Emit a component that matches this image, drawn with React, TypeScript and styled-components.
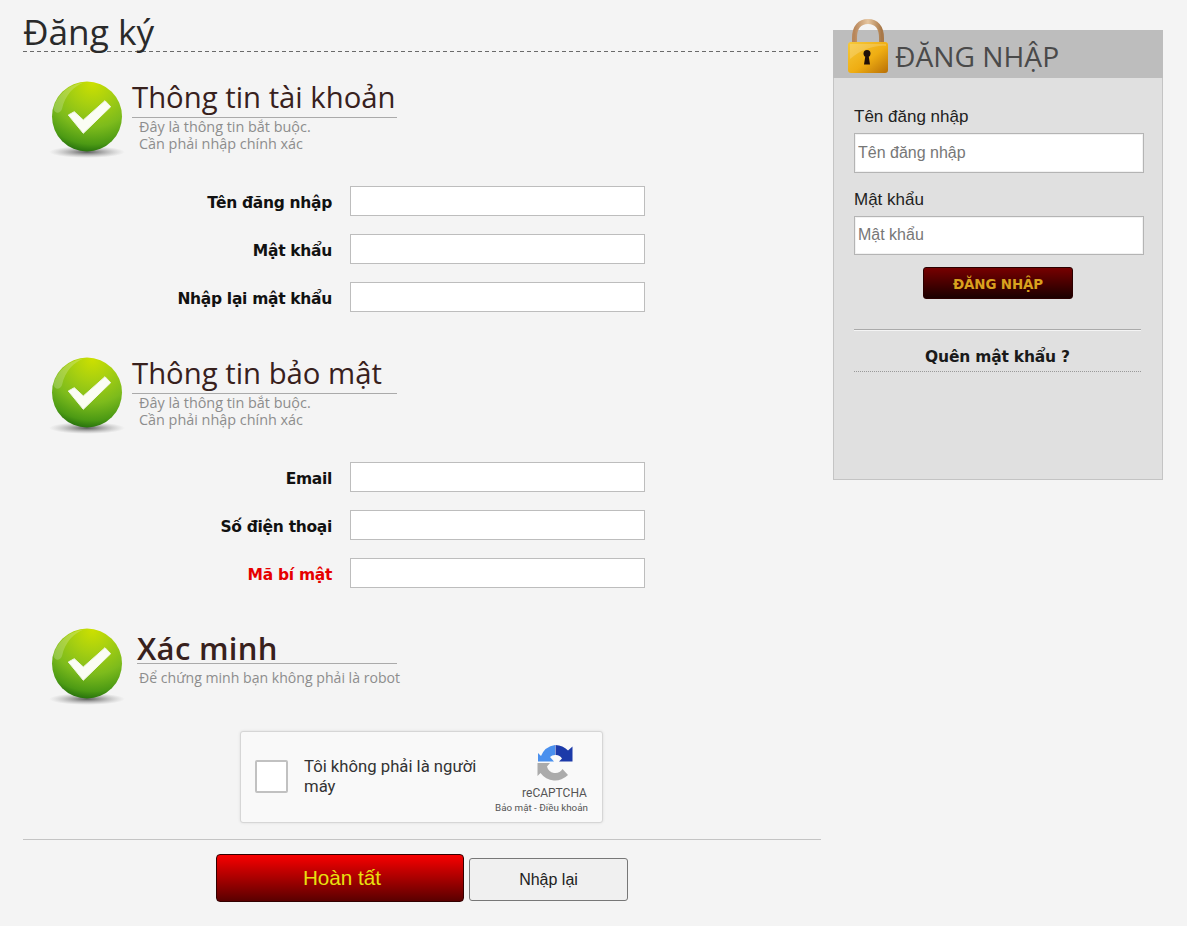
import React from 'react';
import styled, { createGlobalStyle } from 'styled-components';

const Global = createGlobalStyle`
  html, body { margin: 0; padding: 0; background: #f4f4f4; }
  body { font-family: "Liberation Sans", Arial, sans-serif; color: #111; }
  * { box-sizing: border-box; }
`;

const Page = styled.div`
  display: flex;
  align-items: flex-start;
  width: 1187px;
  height: 926px;
  overflow: hidden;
  padding-left: 23px;
`;
const Main = styled.main`
  width: 798px;
  flex: none;
`;
const PageTitle = styled.h1`
  margin: 0;
  height: 52px;
  padding-top: 9px;
  font: 400 35.2px/44px "Open Sans", sans-serif;
  color: #2a2a2a;
  background: repeating-linear-gradient(90deg, #6a6a6a 0 4px, transparent 4px 7px) left bottom / 100% 1px no-repeat;
  white-space: nowrap;
`;
const SectionHead = styled.div<{ $top: number }>`
  display: flex;
  margin: ${p => p.$top}px 0 0 29px;
  height: 80px;
`;
const HeadText = styled.div<{ $inset?: number }>`
  margin-left: 4px;
  width: 265px;
  padding-left: ${p => p.$inset ?? 0}px;
`;
const HeadTitle = styled.div<{ $bold?: boolean }>`
  height: ${p => (p.$bold ? 36 : 37)}px;
  font: ${p => (p.$bold ? '600 31px/40px "Open Sans"' : '400 29.3px/33px "Open Sans"')}, sans-serif;
  letter-spacing: ${p => (p.$bold ? '0.3px' : '0')};
  color: #38211d;
  white-space: nowrap;
  border-bottom: 1px solid #aaa;
`;
const HeadSub = styled.div<{ $shift?: number; $top?: number; $size?: number }>`
  padding-left: ${p => p.$shift ?? 7}px;
  padding-top: ${p => p.$top ?? 0}px;
  font: 400 ${p => p.$size ?? 14.4}px/17px "Open Sans", sans-serif;
  color: #8d8d8d;
  white-space: nowrap;
`;
const Rows = styled.div<{ $top: number }>`
  display: flex;
  flex-direction: column;
  gap: 18px;
  margin-top: ${p => p.$top}px;
`;
const Row = styled.label`
  display: flex;
  align-items: flex-start;
  height: 30px;
`;
const RowLabel = styled.span<{ $red?: boolean }>`
  width: 309px;
  text-align: right;
  font: 700 15.5px/34px "DejaVu Sans", sans-serif;
  color: ${p => (p.$red ? '#e60000' : '#111')};
  letter-spacing: -0.3px;
  white-space: nowrap;
`;
const RowInput = styled.input`
  margin-left: 18px;
  width: 295px;
  height: 29.5px;
  background: #fff;
  border: 1px solid #bdbdbd;
  outline: none;
  padding: 0 4px;
`;
const CaptchaWrap = styled.div`
  display: flex;
  margin: 23px 0 0 217px;
`;
const Captcha = styled.div`
  position: relative;
  width: 363px;
  height: 92px;
  background: #f9f9f9;
  border: 1px solid #d6d6d6;
  border-radius: 3px;
  box-shadow: 0 0 3px rgba(0, 0, 0, 0.1);
  display: flex;
  align-items: center;
`;
const CaptchaBox = styled.div`
  width: 33px;
  height: 33px;
  margin-left: 14px;
  margin-bottom: 2px;
  background: #fff;
  border: 2px solid #c1c1c1;
  border-radius: 2px;
  flex: none;
`;
const CaptchaText = styled.div`
  width: 190px;
  margin-left: 16px;
  margin-bottom: 1px;
  font: 400 16.7px/20px Roboto, sans-serif;
  color: #333;
`;
const CaptchaBrand = styled.div`
  position: absolute;
  right: 12px;
  top: 12px;
  width: 96px;
  display: flex;
  flex-direction: column;
  align-items: center;
`;
const BrandName = styled.div`
  margin-top: 5px;
  font: 400 12px/14px Roboto, sans-serif;
  color: #555;
  margin-left: 25px;
`;
const BrandLinks = styled.div`
  font: 400 9.8px/13px Roboto, sans-serif;
  color: #555;
  white-space: nowrap;
  margin-top: 1px;
  margin-left: -1px;
`;
const Divider = styled.hr`
  margin: 16px 0 0;
  border: 0;
  border-top: 1px solid #c4c4c4;
  height: 0;
`;
const Actions = styled.div`
  display: flex;
  align-items: flex-start;
  gap: 5px;
  margin: 14px 0 0 193px;
`;
const SubmitBtn = styled.button`
  width: 248px;
  height: 48px;
  padding: 1px 0 0 4px;
  border: 1px solid #300;
  border-radius: 4px;
  background: linear-gradient(#f80000, #5a0000);
  color: #e8e010;
  font: 400 20.7px/1 "Liberation Sans", sans-serif;
`;
const ResetBtn = styled.button`
  width: 159px;
  height: 43px;
  margin-top: 4px;
  border: 1px solid #777;
  border-radius: 3px;
  background: #f0f0f0;
  color: #222;
  font: 400 16px/1 "Liberation Sans", sans-serif;
`;
const Side = styled.aside`
  width: 330px;
  height: 450px;
  flex: none;
  margin: 30px 0 0 12px;
  background: #e0e0e0;
  border: 1px solid #c4c4c4;
  border-top: 0;
  position: relative;
`;
const SideHead = styled.div`
  height: 48px;
  margin: 0 -1px;
  padding-left: 62px;
  background: #bdbdbd;
  font: 400 28.2px/52px "Open Sans", sans-serif;
  color: #4a4a4a;
  white-space: nowrap;
`;
const LockHolder = styled.div`
  position: absolute;
  left: 12px;
  top: -12px;
`;
const SideBody = styled.div`
  padding: 28px 18px 0 20px;
`;
const SideLabel = styled.label`
  display: block;
  font: 400 17px/22px "Liberation Sans", sans-serif;
  color: #222;
  height: 27px;
`;
const SideInput = styled.input`
  display: block;
  width: 290px;
  height: 39.5px;
  margin-bottom: 16px;
  padding: 0 3px;
  background: #fff;
  border: 1px solid #b4b4b4;
  box-shadow: inset 0 0 0 1px #f2f2f2;
  outline: none;
  font: 400 16px "Liberation Sans", sans-serif;
  &::placeholder { color: #777; opacity: 1; }
`;
const LoginBtn = styled.button`
  display: block;
  width: 150px;
  height: 32px;
  margin: -4px 0 0 69px;
  padding: 4px 0 0;
  border: 1px solid #2a0000;
  border-radius: 3px;
  background: linear-gradient(#760000, #1b0000);
  color: #d9a11e;
  font: 700 13.4px/1 "DejaVu Sans", sans-serif;
  letter-spacing: -0.1px;
`;
const SideRule = styled.div`
  margin-top: 30px;
  width: 287px;
  border-top: 1px solid #aaa;
  border-bottom: 1px solid #f4f4f4;
  height: 2px;
`;
const Forgot = styled.a`
  display: block;
  width: 287px;
  margin-top: 16px;
  padding-bottom: 4px;
  text-align: center;
  font: 700 15.5px/20px "DejaVu Sans", sans-serif;
  color: #1a1a1a;
  border-bottom: 1px dotted #999;
  letter-spacing: -0.2px;
`;

const CheckIcon = ({ id }: { id: string }) => (
  <svg width="76" height="80" viewBox="0 0 76 80" overflow="visible" style={{ flex: 'none' }}>
    <defs>
      <radialGradient id={`${id}b`} cx="0.58" cy="0.02" r="1.02">
        <stop offset="0" stopColor="#cde000" />
        <stop offset="0.3" stopColor="#a8d010" />
        <stop offset="0.62" stopColor="#7dbb1c" />
        <stop offset="0.86" stopColor="#4c9a14" />
        <stop offset="1" stopColor="#1c660b" />
      </radialGradient>
      <radialGradient id={`${id}s`}>
        <stop offset="0" stopColor="#333" stopOpacity="0.8" />
        <stop offset="1" stopColor="#888" stopOpacity="0" />
      </radialGradient>
    </defs>
    <ellipse cx="35" cy="71" rx="38" ry="6" fill={`url(#${id}s)`} />
    <circle cx="35" cy="35.5" r="35" fill={`url(#${id}b)`} />
    <path d="M1.5 28C5 13 18 3 32 1.5 22 5 13 14 10 28c-2 5-7 5-8.500 0z" fill="#fff" opacity=".2" />
    <path d="M16.300 34L22.300 30.700 31.300 39 53 19.700 58.700 25.700 31.300 52.300z" fill="#fbfdf4" stroke="#f0f7e4" strokeWidth="1" strokeLinejoin="round" />
  </svg>
);

const LockIcon = () => (
  <svg width="44" height="56" viewBox="0 0 44 56">
    <defs>
      <linearGradient id="lk" x1="0" y1="0" x2="1" y2="1">
        <stop offset="0" stopColor="#f6c93a" />
        <stop offset="0.55" stopColor="#efad12" />
        <stop offset="1" stopColor="#b86f06" />
      </linearGradient>
      <linearGradient id="sh" x1="0" y1="0" x2="1" y2="0">
        <stop offset="0" stopColor="#b8865a" />
        <stop offset="0.5" stopColor="#e6c6a0" />
        <stop offset="1" stopColor="#a87848" />
      </linearGradient>
    </defs>
    <path d="M8.500 27V20C8.500 9 14 3.500 22 3.500S35.500 9 35.500 20V27" fill="none" stroke="url(#sh)" strokeWidth="5" />
    <rect x="2" y="24" width="40" height="31" rx="3" fill="url(#lk)" />
    <path d="M4 26h36v2C28 27 15 32 4 41z" fill="#fff" opacity=".18" />
    <circle cx="21" cy="35.500" r="3.500" fill="#201008" />
    <path d="M19.500 37h3l1.500 9.500h-6z" fill="#201008" />
  </svg>
);

const RecaptchaIcon = () => (
  <svg width="36" height="37" viewBox="0 0 36 37" style={{ marginLeft: 25 }}>
    <path d="M1 17.500V9L4 12A18 18 0 0 1 18 1V11A7 7 0 0 0 13 13L17 17.500Z" fill="#4a90ee" />
    <path d="M18.500 1A18 18 0 0 1 31 6.500L35.500 2.500V17.500H22L25 14.500A7 7 0 0 0 18.500 11Z" fill="#1c3aa9" />
    <path d="M0.500 19H13L10 22.500A8.500 8.500 0 0 0 25.500 25L31 31A18 18 0 0 1 3.500 29L0.500 32Z" fill="#ababab" />
  </svg>
);

const FormRow = ({ label, red }: { label: string; red?: boolean }) => (
  <Row>
    <RowLabel $red={red}>{label}</RowLabel>
    <RowInput />
  </Row>
);

export default function App() {
  return (
    <Page>
      <Global />
      <Main>
        <PageTitle>Đăng ký</PageTitle>
        <SectionHead $top={29}>
          <CheckIcon id="a" />
          <HeadText>
            <HeadTitle>Thông tin tài khoản</HeadTitle>
            <HeadSub>Đây là thông tin bắt buộc.<br />Cần phải nhập chính xác</HeadSub>
          </HeadText>
        </SectionHead>
        <Rows $top={25}>
          <FormRow label="Tên đăng nhập" />
          <FormRow label="Mật khẩu" />
          <FormRow label="Nhập lại mật khẩu" />
        </Rows>
        <SectionHead $top={45}>
          <CheckIcon id="b" />
          <HeadText>
            <HeadTitle>Thông tin bảo mật</HeadTitle>
            <HeadSub>Đây là thông tin bắt buộc.<br />Cần phải nhập chính xác</HeadSub>
          </HeadText>
        </SectionHead>
        <Rows $top={25}>
          <FormRow label="Email" />
          <FormRow label="Số điện thoại" />
          <FormRow label="Mã bí mật" red />
        </Rows>
        <SectionHead $top={40}>
          <CheckIcon id="c" />
          <HeadText $inset={5}>
            <HeadTitle $bold>Xác minh</HeadTitle>
            <HeadSub $shift={2} $top={5} $size={14.1}>Để chứng minh bạn không phải là robot</HeadSub>
          </HeadText>
        </SectionHead>
        <CaptchaWrap>
          <Captcha>
            <CaptchaBox />
            <CaptchaText>Tôi không phải là người máy</CaptchaText>
            <CaptchaBrand>
              <RecaptchaIcon />
              <BrandName>reCAPTCHA</BrandName>
              <BrandLinks>Bảo mật - Điều khoản</BrandLinks>
            </CaptchaBrand>
          </Captcha>
        </CaptchaWrap>
        <Divider />
        <Actions>
          <SubmitBtn type="button">Hoàn tất</SubmitBtn>
          <ResetBtn type="button">Nhập lại</ResetBtn>
        </Actions>
      </Main>
      <Side>
        <LockHolder><LockIcon /></LockHolder>
        <SideHead>ĐĂNG NHẬP</SideHead>
        <SideBody>
          <SideLabel>Tên đăng nhập</SideLabel>
          <SideInput placeholder="Tên đăng nhập" />
          <SideLabel>Mật khẩu</SideLabel>
          <SideInput placeholder="Mật khẩu" />
          <LoginBtn type="button">ĐĂNG NHẬP</LoginBtn>
          <SideRule />
          <Forgot>Quên mật khẩu ?</Forgot>
        </SideBody>
      </Side>
    </Page>
  );
}
